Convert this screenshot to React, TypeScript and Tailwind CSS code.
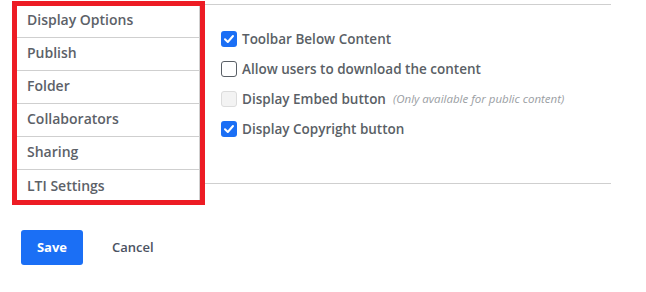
const tabs = ["Display Options", "Publish", "Folder", "Collaborators", "Sharing", "LTI Settings"];

type Opt = {
    label: string;
    state: "on" | "off" | "disabled";
    note?: string;
};

const options: Opt[] = [
    { label: "Toolbar Below Content", state: "on" },
    { label: "Allow users to download the content", state: "off" },
    { label: "Display Embed button", state: "disabled", note: "(Only available for public content)" },
    { label: "Display Copyright button", state: "on" }
];

const Box = ({ state }: { state: Opt["state"] }) => {
    if (state === "on") {
        return (
            <span className="flex h-4 w-4 items-center justify-center rounded-[3px] bg-[#1b6ff5]">
                <svg width="12" height="12" viewBox="0 0 12 12" fill="none">
                    <path d="M2 6.3 L4.8 9 L10 3" stroke="#fff" strokeWidth="2" strokeLinecap="round" strokeLinejoin="round" />
                </svg>
            </span>
        );
    }
    if (state === "disabled") {
        return <span className="h-4 w-4 rounded-[3px] border border-[#dcdcdc] bg-[#f3f3f3]" />;
    }
    return <span className="h-4 w-4 rounded-[3px] border border-[#5a5f66] bg-white" />;
};

export default function App() {
    return (
        <div className="relative min-h-screen bg-white font-['Open_Sans',sans-serif]">

            {/* PANELS */}
            <div className="flex pl-[14px] pt-1">

                {/* tabs */}
                <div className="w-[186px] border border-[#cfcfcf]">
                    {tabs.map((t, i) => (
                        <div
                            key={t}
                            className={`flex h-[33px] items-center pb-[3px] pl-3 text-[14px] font-semibold text-[#5c6168] ${i < tabs.length - 1 ? "border-b border-[#cfcfcf]" : "h-[32px]"}`}
                        >
                            {t}
                        </div>
                    ))}
                </div>

                {/* options */}
                <div className="h-[180px] w-[411px] border-y border-[#cfcfcf] pl-[21px] pt-[19px]">
                    {options.map((o) => (
                        <label key={o.label} className="flex h-[30px] items-center gap-[5px]">
                            <Box state={o.state} />
                            <span className="text-[13.5px] font-semibold text-[#5a5f66]">{o.label}</span>
                            {o.note && (
                                <span className="ml-[2px] text-[11.5px] italic text-[#9a9ea3]">{o.note}</span>
                            )}
                        </label>
                    ))}
                </div>

            </div>

            {/* ACTIONS */}
            <div className="mt-[26px] flex items-center pl-[21px]">
                <button className="h-[35px] w-[62px] rounded-[3px] bg-[#1b6ff5] text-[13px] font-bold text-white">
                    Save
                </button>
                <button className="ml-[29px] text-[13px] font-semibold text-[#4b5262]">
                    Cancel
                </button>
            </div>

            {/* highlight box */}
            <div className="pointer-events-none absolute left-[12px] top-[1px] h-[204px] w-[193px] border-[5px] border-[#ed1c24]" />

        </div>
    );
}
